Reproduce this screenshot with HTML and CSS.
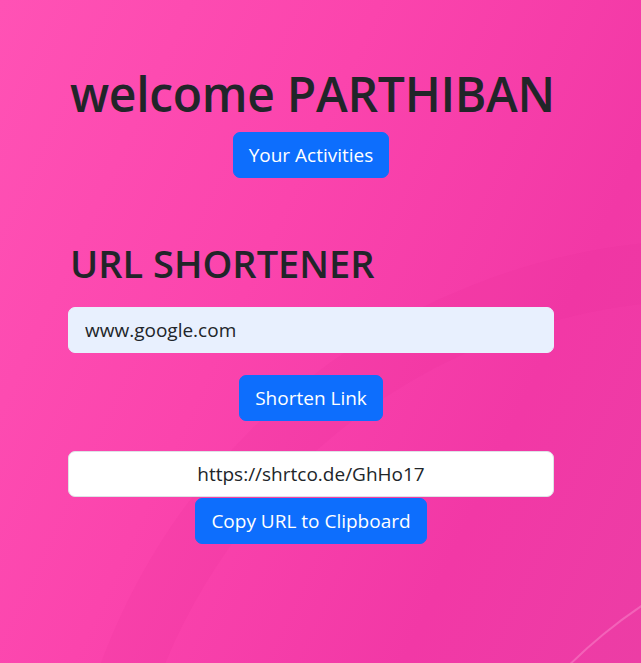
FILE: index.html
```html
<!DOCTYPE html>
<html lang="en">
<head>
<meta charset="utf-8">
<title>URL Shortener</title>
<link rel="stylesheet" href="styles.css">
</head>
<body>
<div class="bg">
  <div class="curve curve-a"></div>
  <div class="curve curve-b"></div>
</div>
<main class="container">
  <section class="welcome">
    <h1 class="welcome-title">welcome PARTHIBAN</h1>
    <button class="btn">Your Activities</button>
  </section>
  <section class="shortener">
    <h2 class="shortener-title">URL SHORTENER</h2>
    <input class="field field-autofill" type="text" value="www.google.com">
    <div class="row"><button class="btn">Shorten Link</button></div>
    <input class="field field-result" type="text" value="https://shrtco.de/GhHo17">
    <div class="row tight"><button class="btn">Copy URL to Clipboard</button></div>
  </section>
</main>
</body>
</html>
```
FILE: styles.css
```css
* { box-sizing: border-box; }
html, body { margin: 0; height: 100%; }
body {
  font-family: "Open Sans", "Noto Sans", sans-serif;
  color: #212529;
  background: linear-gradient(115deg, #ff52b5 0%, #fb44ad 40%, #f238a6 75%, #ec3da5 100%);
  overflow: hidden;
  position: relative;
}
.bg { position: absolute; inset: 0; pointer-events: none; overflow: hidden; }
.curve { position: absolute; border-radius: 50%; }
.curve-a {
  width: 1300px; height: 1300px; left: 60px; top: 240px;
  border: 60px solid rgba(225, 40, 150, 0.10);
}
.curve-b {
  width: 1000px; height: 1000px; left: 420px; top: 520px;
  border-top: 2px solid rgba(255, 170, 220, 0.35);
  border-left: 2px solid rgba(255, 170, 220, 0.25);
}
.container {
  position: relative;
  width: 486px;
  margin-left: 68px;
  padding-top: 65px;
  display: flex;
  flex-direction: column;
}
.welcome { display: flex; flex-direction: column; align-items: center; }
.welcome-title {
  margin: 0;
  font-size: 48px;
  font-weight: 600;
  line-height: 58px;
  align-self: flex-start;
  letter-spacing: -0.3px;
  padding-left: 2px;
  white-space: nowrap;
}
.btn {
  font-family: inherit;
  background: #0d6efd;
  color: #fff;
  border: 1px solid #0d6efd;
  border-radius: 7px;
  font-size: 19px;
  line-height: 28px;
  padding: 8px 15px;
  cursor: pointer;
}
.welcome .btn { margin-top: 9px; }
.shortener { margin-top: 62px; display: flex; flex-direction: column; }
.shortener-title {
  margin: 0 0 21px;
  padding-left: 2px;
  font-size: 38px;
  font-weight: 600;
  line-height: 46px;
  letter-spacing: 0;
  white-space: nowrap;
}
.field {
  width: 100%;
  height: 46px;
  border: 1px solid #dee2e6;
  border-radius: 7px;
  padding: 0 16px;
  font-family: inherit;
  font-size: 19px;
  color: #212529;
  outline: none;
}
.field-autofill { background: #e8f0fe; border-color: #e8f0fe; }
.field-result { background: #fff; text-align: center; }
.row { display: flex; justify-content: center; margin: 22px 0 30px; }
.row.tight { margin: 1px 0 0; }
```
